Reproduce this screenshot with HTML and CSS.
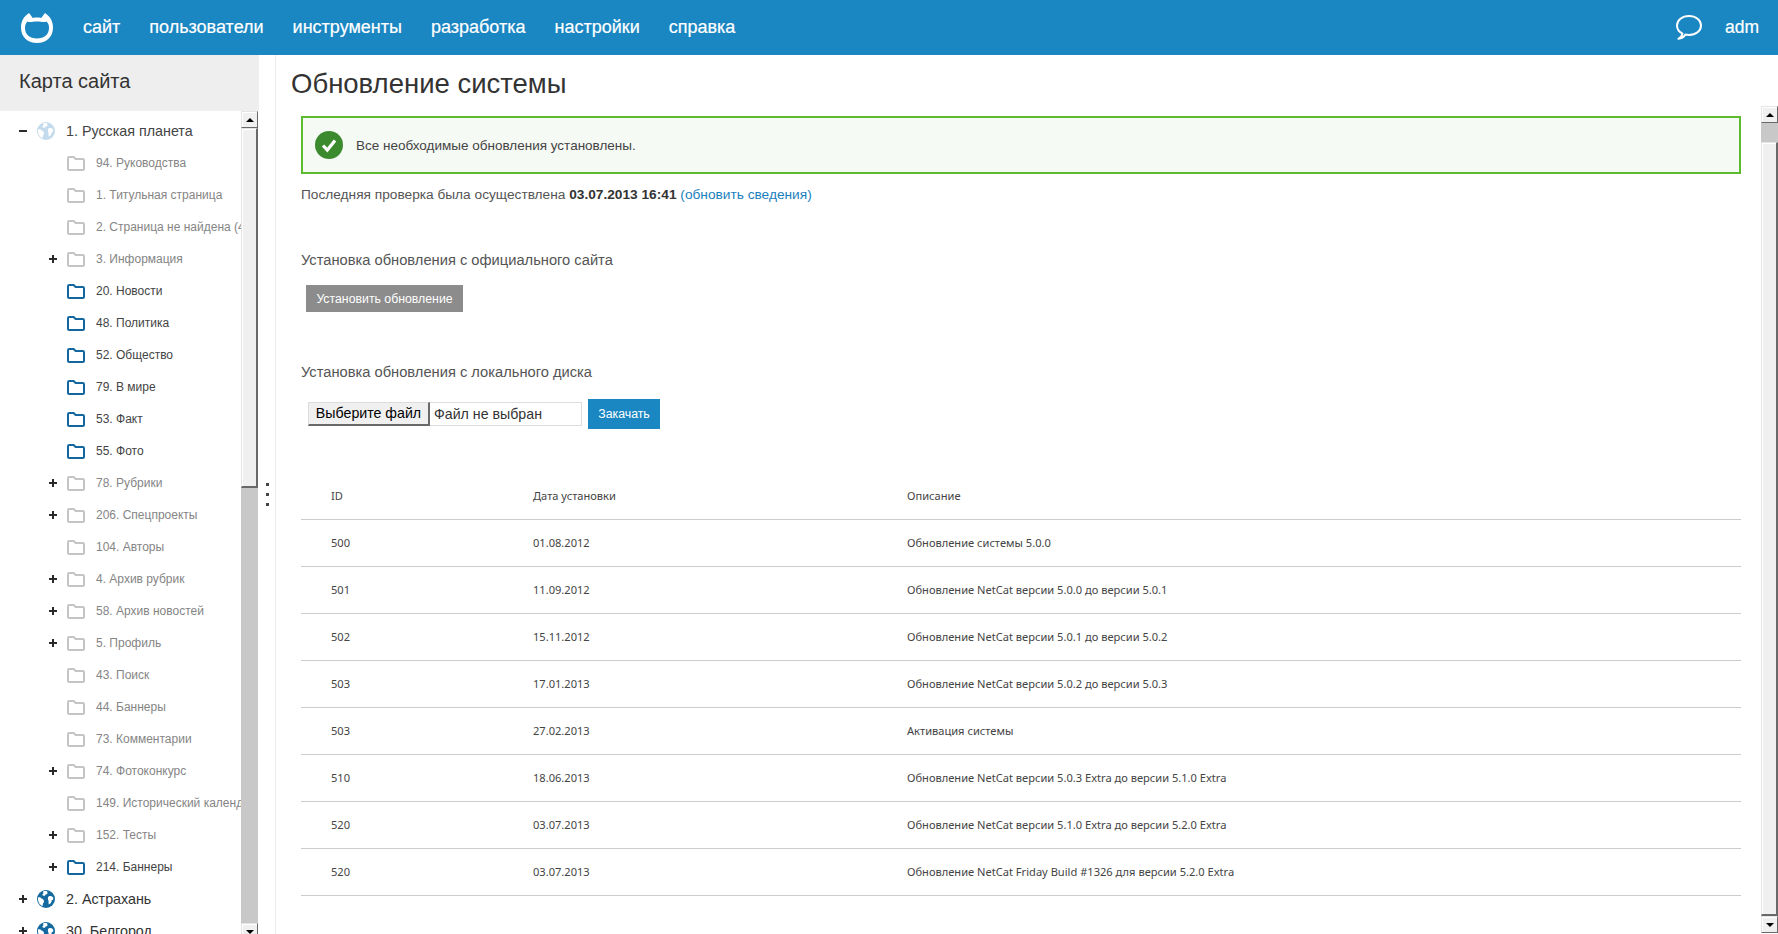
FILE: index.html
```html
<!DOCTYPE html>
<html lang="ru">
<head>
<meta charset="utf-8">
<title>Обновление системы</title>
<link rel="stylesheet" href="styles.css">
</head>
<body>
<svg class="defs" width="0" height="0" aria-hidden="true">
  <symbol id="folder" viewBox="0 0 18 15">
    <path d="M1 13V2.2C1 1.5 1.5 1 2.2 1H6.6L8.6 3H15.8C16.5 3 17 3.5 17 4.2V13C17 13.6 16.6 14 16 14H2C1.4 14 1 13.6 1 13Z" fill="none" stroke="currentColor" stroke-width="2"/>
  </symbol>
  <symbol id="globe" viewBox="0 0 18 18">
    <circle cx="9" cy="9" r="9" fill="currentColor"/>
    <path d="M1 7.5C2.5 6.8 3.6 7.4 4.4 8.4 5.5 8.7 6.8 9.5 7 11 7.2 12.4 6 12.9 5.8 14.2 5.7 15 5.8 15.7 5.4 16.3 3 15 1 12.4 1 9.5ZM6 1.4C7.5 1 9 1 10 1.2L10.6 3.2C10 4.4 9 4 8.4 5 7.8 6 6.8 6 6 5.6 5 5 5.4 3.8 6.4 3.4ZM11.6 6.6C12.8 5.8 14.6 6 15.4 6.8 16.4 7.8 16.6 9 16 9.8 15 9.6 14.6 10.4 14.6 11.4 14 12.8 12.8 14 11.8 14.4 11.4 13 11.8 11.6 11.4 10.6 10.8 9.2 10.6 7.4 11.6 6.6Z" fill="#fff"/>
  </symbol>
</svg>

<header class="topbar">
  <svg class="logo" viewBox="0 0 34 32" width="34" height="32">
    <path fill="#fff" fill-rule="evenodd" d="M9 1 12.800 6C15.600 5.400 18.400 5.400 21.200 6L25 1C30.400 4.500 33 9.500 33 15.500 33 25.500 26 31 17 31 8 31 1 25.500 1 15.500 1 9.500 3.600 4.500 9 1ZM7.500 9.500C5.500 11.500 5 13.500 5 16 5 22.500 10 26.500 17 26.500 24 26.500 29 22.500 29 16 29 13.500 28.500 11.500 26.500 9.500 24.500 10.800 21 9.500 17 9.500 13 9.500 9.500 10.800 7.500 9.500Z"/>
  </svg>
  <nav class="nav">
    <a href="#">сайт</a>
    <a href="#">пользователи</a>
    <a href="#">инструменты</a>
    <a href="#">разработка</a>
    <a href="#">настройки</a>
    <a href="#">справка</a>
  </nav>
  <svg class="chat" viewBox="0 0 28 27" width="28" height="27">
    <path d="M7.500 19.600C4 17.800 2 15 2 11.500 2 6 7.200 2 14 2 20.800 2 26 6 26 11.500 26 17 20.800 21 14 21 12.600 21 11.400 20.800 10.400 20.600 9 22.800 6.600 24.400 3.400 24.800 5.600 23.600 7 21.800 7.500 19.600Z" fill="none" stroke="#fff" stroke-width="2" stroke-linejoin="round"/>
  </svg>
  <a class="user" href="#">adm</a>
</header>

<div class="layout">
  <aside class="sidebar">
    <h2 class="side-title">Карта сайта</h2>
    <div class="side-body">
      <ul class="tree">
        <li class="row l1 off"><i class="toggle minus"></i><svg class="ic-globe"><use href="#globe"/></svg><span>1. Русская планета</span></li>
        <li class="row l2 off"><i class="toggle"></i><svg class="ic-folder"><use href="#folder"/></svg><span>94. Руководства</span></li>
        <li class="row l2 off"><i class="toggle"></i><svg class="ic-folder"><use href="#folder"/></svg><span>1. Титульная страница</span></li>
        <li class="row l2 off"><i class="toggle"></i><svg class="ic-folder"><use href="#folder"/></svg><span>2. Страница не найдена (404)</span></li>
        <li class="row l2 off"><i class="toggle plus"></i><svg class="ic-folder"><use href="#folder"/></svg><span>3. Информация</span></li>
        <li class="row l2"><i class="toggle"></i><svg class="ic-folder"><use href="#folder"/></svg><span>20. Новости</span></li>
        <li class="row l2"><i class="toggle"></i><svg class="ic-folder"><use href="#folder"/></svg><span>48. Политика</span></li>
        <li class="row l2"><i class="toggle"></i><svg class="ic-folder"><use href="#folder"/></svg><span>52. Общество</span></li>
        <li class="row l2"><i class="toggle"></i><svg class="ic-folder"><use href="#folder"/></svg><span>79. В мире</span></li>
        <li class="row l2"><i class="toggle"></i><svg class="ic-folder"><use href="#folder"/></svg><span>53. Факт</span></li>
        <li class="row l2"><i class="toggle"></i><svg class="ic-folder"><use href="#folder"/></svg><span>55. Фото</span></li>
        <li class="row l2 off"><i class="toggle plus"></i><svg class="ic-folder"><use href="#folder"/></svg><span>78. Рубрики</span></li>
        <li class="row l2 off"><i class="toggle plus"></i><svg class="ic-folder"><use href="#folder"/></svg><span>206. Спецпроекты</span></li>
        <li class="row l2 off"><i class="toggle"></i><svg class="ic-folder"><use href="#folder"/></svg><span>104. Авторы</span></li>
        <li class="row l2 off"><i class="toggle plus"></i><svg class="ic-folder"><use href="#folder"/></svg><span>4. Архив рубрик</span></li>
        <li class="row l2 off"><i class="toggle plus"></i><svg class="ic-folder"><use href="#folder"/></svg><span>58. Архив новостей</span></li>
        <li class="row l2 off"><i class="toggle plus"></i><svg class="ic-folder"><use href="#folder"/></svg><span>5. Профиль</span></li>
        <li class="row l2 off"><i class="toggle"></i><svg class="ic-folder"><use href="#folder"/></svg><span>43. Поиск</span></li>
        <li class="row l2 off"><i class="toggle"></i><svg class="ic-folder"><use href="#folder"/></svg><span>44. Баннеры</span></li>
        <li class="row l2 off"><i class="toggle"></i><svg class="ic-folder"><use href="#folder"/></svg><span>73. Комментарии</span></li>
        <li class="row l2 off"><i class="toggle plus"></i><svg class="ic-folder"><use href="#folder"/></svg><span>74. Фотоконкурс</span></li>
        <li class="row l2 off"><i class="toggle"></i><svg class="ic-folder"><use href="#folder"/></svg><span>149. Исторический календарь</span></li>
        <li class="row l2 off"><i class="toggle plus"></i><svg class="ic-folder"><use href="#folder"/></svg><span>152. Тесты</span></li>
        <li class="row l2"><i class="toggle plus"></i><svg class="ic-folder"><use href="#folder"/></svg><span>214. Баннеры</span></li>
        <li class="row l1"><i class="toggle plus"></i><svg class="ic-globe"><use href="#globe"/></svg><span>2. Астрахань</span></li>
        <li class="row l1"><i class="toggle plus"></i><svg class="ic-globe"><use href="#globe"/></svg><span>30. Белгород</span></li>
      </ul>
      <div class="sb sb-left">
        <div class="sb-btn up"></div>
        <div class="sb-thumb thumb-left"></div>
        <div class="sb-track"></div>
        <div class="sb-btn down"></div>
      </div>
    </div>
  </aside>

  <div class="splitter"><b></b><b></b><b></b></div>

  <main class="main">
    <h1 class="page-title">Обновление системы</h1>
    <div class="main-body">
      <div class="pane">
        <div class="alert">
          <svg class="ok" viewBox="0 0 28 28" width="28" height="28">
            <circle cx="14" cy="14" r="14" fill="#3b8a2e"/>
            <path d="M8 14.500 12.300 19 20 9.500" fill="none" stroke="#fff" stroke-width="3.200"/>
          </svg>
          <span>Все необходимые обновления установлены.</span>
        </div>
        <p class="last-check">Последняя проверка была осуществлена <b>03.07.2013 16:41</b> <a href="#">(обновить сведения)</a></p>

        <h3 class="sect sect-a">Установка обновления с официального сайта</h3>
        <button class="btn btn-grey" type="button">Установить обновление</button>

        <h3 class="sect sect-b">Установка обновления с локального диска</h3>
        <div class="upload">
          <div class="file">
            <button class="file-btn" type="button">Выберите файл</button>
            <span class="file-name">Файл не выбран</span>
          </div>
          <button class="btn btn-blue" type="button">Закачать</button>
        </div>

        <table class="updates">
          <thead>
            <tr><th class="c1">ID</th><th class="c2">Дата установки</th><th>Описание</th></tr>
          </thead>
          <tbody>
            <tr><td>500</td><td>01.08.2012</td><td>Обновление системы 5.0.0</td></tr>
            <tr><td>501</td><td>11.09.2012</td><td>Обновление NetCat версии 5.0.0 до версии 5.0.1</td></tr>
            <tr><td>502</td><td>15.11.2012</td><td>Обновление NetCat версии 5.0.1 до версии 5.0.2</td></tr>
            <tr><td>503</td><td>17.01.2013</td><td>Обновление NetCat версии 5.0.2 до версии 5.0.3</td></tr>
            <tr><td>503</td><td>27.02.2013</td><td>Активация системы</td></tr>
            <tr><td>510</td><td>18.06.2013</td><td>Обновление NetCat версии 5.0.3 Extra до версии 5.1.0 Extra</td></tr>
            <tr><td>520</td><td>03.07.2013</td><td>Обновление NetCat версии 5.1.0 Extra до версии 5.2.0 Extra</td></tr>
            <tr><td>520</td><td>03.07.2013</td><td>Обновление NetCat Friday Build #1326 для версии 5.2.0 Extra</td></tr>
          </tbody>
        </table>
      </div>
      <div class="sb sb-right">
        <div class="sb-btn up"></div>
        <div class="sb-track track-short"></div>
        <div class="sb-thumb thumb-right"></div>
        <div class="sb-btn down"></div>
      </div>
    </div>
  </main>
</div>
</body>
</html>
```

FILE: styles.css
```css
* { box-sizing: border-box; }
html, body { height: 100%; }
body {
  margin: 0;
  overflow: hidden;
  background: #fff;
  color: #333;
  font-family: "Liberation Sans", Arial, sans-serif;
  display: flex;
  flex-direction: column;
}
.defs { display: block; height: 0; }

/* top bar */
.topbar {
  flex: 0 0 55px;
  background: #1a86c2;
  display: flex;
  align-items: center;
  padding: 0 19px 0 20px;
}
.logo { flex: none; margin-right: 29px; }
.nav { display: flex; gap: 29px; flex: 1; }
.nav a, .user {
  color: #fff;
  text-decoration: none;
  -webkit-text-stroke: 0.2px #fff;
}
.nav a { font-size: 18px; }
.user { font-size: 17.500px; }
.chat { flex: none; margin-right: 22px; }

/* layout */
.layout { flex: 1; min-height: 0; display: flex; }
.sidebar { flex: 0 0 259px; display: flex; flex-direction: column; }
.side-title {
  flex: 0 0 56px;
  margin: 0;
  padding: 0 0 4px 19px;
  background: #eee;
  font-size: 20px;
  font-weight: 400;
  line-height: 52px;
}
.side-body { flex: none; display: flex; height: 829px; }
.tree {
  flex: 0 0 241px;
  list-style: none;
  margin: 0;
  padding: 4px 0 0;
  overflow: hidden;
}
.row {
  height: 32px;
  display: flex;
  align-items: center;
  white-space: nowrap;
}
.row span { flex: none; }
.row.l1 { padding-left: 19px; font-size: 14.300px; color: #333; }
.row.l2 { padding-left: 49px; font-size: 12px; color: #444; }
.row.off { color: #858585; }
.row.l1.off { color: #444; }

.toggle { flex: 0 0 8px; width: 8px; height: 8px; display: block; }
.toggle.plus {
  background:
    linear-gradient(#2b2b2b, #2b2b2b) center / 8px 2px no-repeat,
    linear-gradient(#2b2b2b, #2b2b2b) center / 2px 8px no-repeat;
}
.toggle.minus { background: linear-gradient(#2b2b2b, #2b2b2b) center / 8px 2px no-repeat; }

.ic-globe { flex: none; width: 18px; height: 18px; margin: 0 11px 0 10px; color: #15699f; }
.off .ic-globe { color: #c3dbec; }
.ic-folder { flex: none; width: 18px; height: 15px; margin: 0 11px 0 10px; color: #12679f; }
.off .ic-folder { color: #c4c4c4; }

/* imitation of the classic scrollbars */
.sb { flex: 0 0 17px; display: flex; flex-direction: column; }
.sb-btn {
  flex: 0 0 17px;
  background: #f0f0f0;
  border: 1px solid;
  border-color: #e4e4e4 #696969 #696969 #e4e4e4;
  box-shadow: inset 1px 1px 0 #fff;
  display: flex;
  align-items: center;
  justify-content: center;
}
.sb-btn::before {
  content: "";
  border-left: 4px solid transparent;
  border-right: 4px solid transparent;
}
.sb-btn.up::before { border-bottom: 4px solid #000; }
.sb-btn.down::before { border-top: 4px solid #000; }
.sb-thumb {
  background: #f0f0f0;
  border: 1px solid;
  border-color: #e4e4e4 #696969 #696969 #e4e4e4;
  border-bottom-width: 2px;
  border-right-width: 2px;
  box-shadow: inset 1px 1px 0 #fff;
}
.sb-track { background: #c8c8c8; flex: 1; }
.thumb-left { flex: 0 0 360px; }
.track-short { flex: 0 0 19px; }
.thumb-right { flex: 1; }
.sb-right { margin-bottom: 1px; }

/* splitter */
.splitter {
  flex: 0 0 17px;
  border-right: 1px solid #ececec;
  display: flex;
  flex-direction: column;
  align-items: center;
  justify-content: center;
  gap: 7px;
}
.splitter b { width: 3px; height: 3px; background: #444; }

/* main */
.main { flex: 1; min-width: 0; display: flex; flex-direction: column; }
.page-title {
  flex: 0 0 51px;
  min-height: 0;
  height: 51px;
  margin: 0;
  padding: 4px 0 0 15px;
  font-size: 27.500px;
  font-weight: 400;
  line-height: 50px;
  color: #333;
}
.main-body { flex: 1; min-height: 0; display: flex; }
.pane { flex: 1; min-width: 0; padding: 10px 20px 0 25px; overflow: hidden; }

.alert {
  height: 58px;
  border: 2px solid #5cbb2f;
  background: #f6faf5;
  display: flex;
  align-items: center;
  padding-left: 12px;
  font-size: 13.500px;
  color: #444;
}
.ok { flex: none; margin-right: 13px; }
.last-check { margin: 11px 0 0; font-size: 13.700px; line-height: 20px; color: #555; }
.last-check b { color: #333; }
.last-check a { color: #1a7fbd; text-decoration: none; }
.sect { margin: 0; font-size: 14.700px; font-weight: 400; line-height: 20px; color: #555; }
.sect-a { margin-top: 45px; }
.sect-b { margin-top: 50px; }

.btn {
  border: 0;
  color: #fff;
  font-family: inherit;
  font-size: 12.300px;
  height: 27px;
  padding: 0;
  display: block;
}
.btn-grey { background: #8c8c8c; width: 157px; margin: 15px 0 0 5px; }
.btn-blue { background: #1a86c2; width: 72px; height: 30px; }

.upload { margin: 17px 0 0 7px; display: flex; align-items: center; gap: 6px; height: 30px; }
.file {
  width: 274px;
  height: 24px;
  border: 1px solid #ddd;
  display: flex;
  align-items: center;
  font-size: 14.200px;
  color: #333;
}
.file-btn {
  width: 122px;
  height: 24px;
  margin: -1px 0 0 -1px;
  padding: 0;
  background: #f0f0f0;
  border: 1px solid;
  border-width: 1px 2px 2px 1px;
  border-color: #ddd #696969 #696969 #ddd;
  color: #000;
  font-family: inherit;
  font-size: 14.200px;
}
.file-name { padding-left: 4px; }

.updates {
  width: 1440px;
  margin-top: 43px;
  border-collapse: collapse;
  table-layout: fixed;
  font-family: "Noto Sans", "Liberation Sans", sans-serif;
  font-size: 11.100px;
  color: #444;
}
.updates th, .updates td {
  height: 47px;
  padding: 0 0 0 30px;
  text-align: left;
  font-weight: 400;
  border-bottom: 1px solid #ccc;
}
.c1 { width: 202px; }
.c2 { width: 374px; }
```
